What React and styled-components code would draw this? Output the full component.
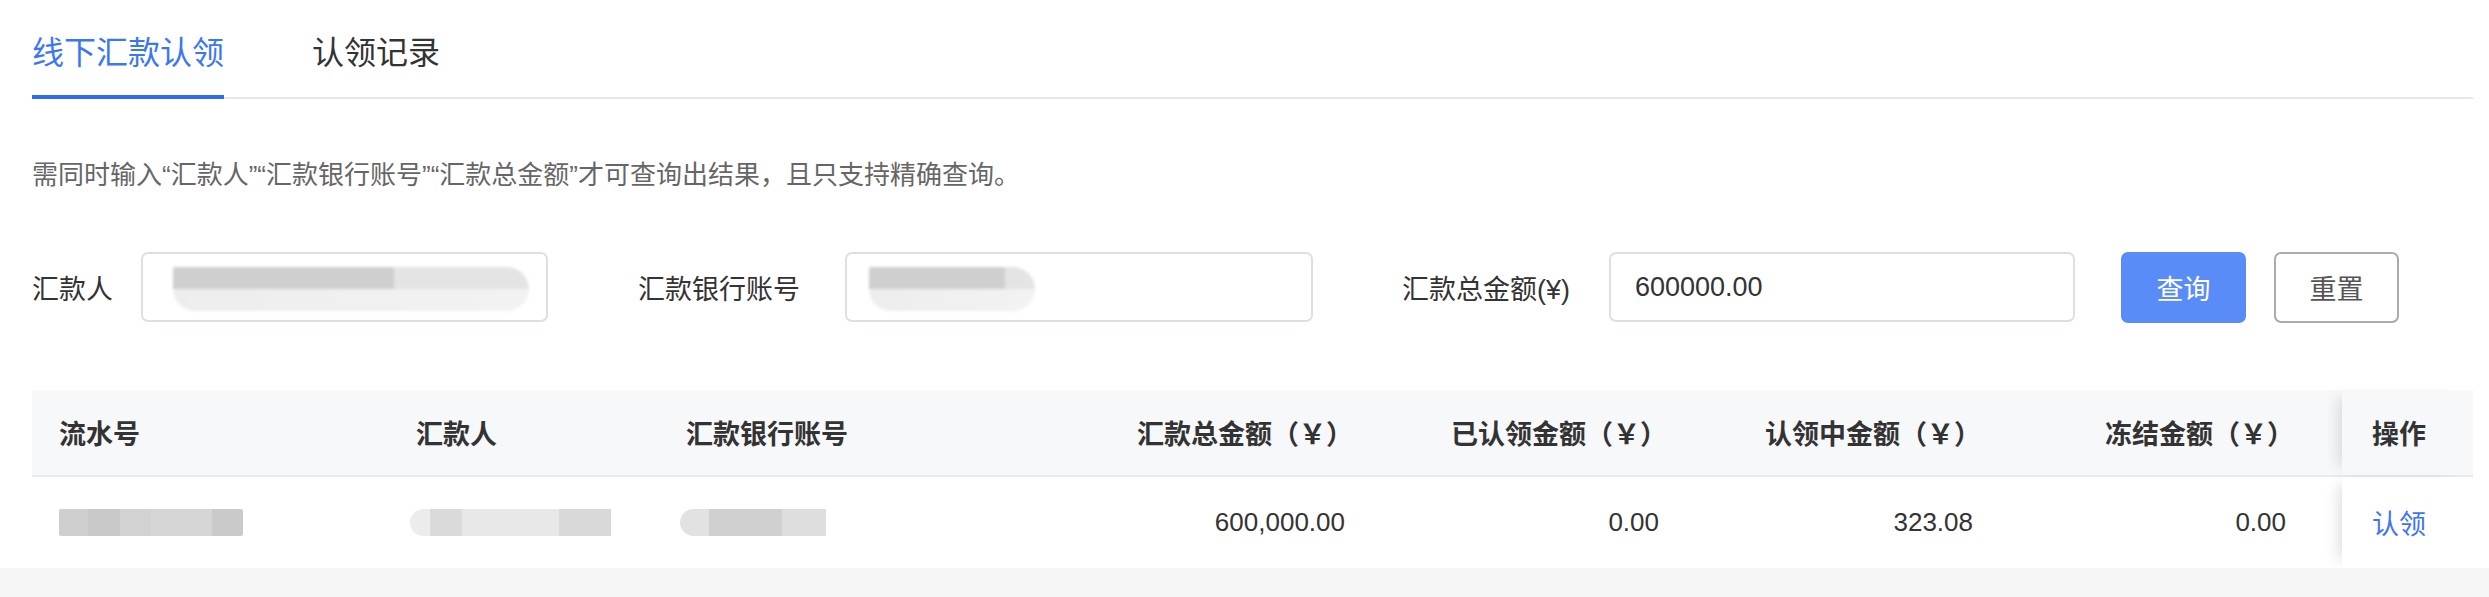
import React from 'react';
import styled, {createGlobalStyle} from 'styled-components';

const GlobalStyle = createGlobalStyle`
  html, body {
    margin: 0;
    padding: 0;
    background: #f6f6f6;
    font-family: "Liberation Sans", "Noto Sans CJK SC", sans-serif;
  }
  * {
    box-sizing: border-box;
  }
`;

const columns = [
  {title: '流水号', w: 357},
  {title: '汇款人', w: 270},
  {title: '汇款银行账号', w: 399},
  {title: '汇款总金额（￥）', w: 314, right: true},
  {title: '已认领金额（￥）', w: 314, right: true},
  {title: '认领中金额（￥）', w: 314, right: true},
  {title: '冻结金额（￥）', w: 342, right: true, pr: 56},
];

const row = {
  total: '600,000.00',
  claimed: '0.00',
  claiming: '323.08',
  frozen: '0.00',
};

function App() {
  return (
    <>
      <GlobalStyle/>
      <Page>
        <TabBar>
          <Tab $active>线下汇款认领</Tab>
          <Tab>认领记录</Tab>
        </TabBar>

        <Hint>需同时输入“汇款人”“汇款银行账号”“汇款总金额”才可查询出结果，且只支持精确查询。</Hint>

        <FilterRow>
          <FormItem $mr={90}>
            <Label $gap={28}>汇款人</Label>
            <Field $w={407}>
              <Input readOnly value=""/>
              <InputMask $left={32} $w={356} $dark={62}/>
            </Field>
          </FormItem>
          <FormItem $mr={89}>
            <Label $gap={45}>汇款银行账号</Label>
            <Field $w={468}>
              <Input readOnly value=""/>
              <InputMask $left={24} $w={166} $dark={82}/>
            </Field>
          </FormItem>
          <FormItem $mr={46}>
            <Label $gap={39}>汇款总金额(¥)</Label>
            <Field $w={466}>
              <Input readOnly value="600000.00"/>
            </Field>
          </FormItem>
          <Button $primary>查询</Button>
          <Button>重置</Button>
        </FilterRow>

        <Table>
          <HeadRow>
            {columns.map(c => (
              <HeadCell key={c.title} $w={c.w} $right={c.right} $pr={c.pr}>{c.title}</HeadCell>
            ))}
            <FixedHead>操作</FixedHead>
          </HeadRow>
          <BodyRow>
            <Cell $w={357}><CellMask $w={184} $tone="dark"/></Cell>
            <Cell $w={270}><CellMask $w={201} $tone="light" $round/></Cell>
            <Cell $w={399}><CellMask $w={146} $tone="mid" $round/></Cell>
            <Cell $w={314} $right>{row.total}</Cell>
            <Cell $w={314} $right>{row.claimed}</Cell>
            <Cell $w={314} $right>{row.claiming}</Cell>
            <Cell $w={342} $right $pr={56}>{row.frozen}</Cell>
            <FixedCell><Link>认领</Link></FixedCell>
          </BodyRow>
        </Table>
      </Page>
    </>
  );
}

const Page = styled.div`
  background: #fff;
  padding: 0 16px 0 32px;
`;

const TabBar = styled.div`
  display: flex;
  gap: 88px;
  height: 99px;
  border-bottom: 2px solid #e4e7ed;
`;

const Tab = styled.div`
  position: relative;
  height: 97px;
  padding-top: 33px;
  font-size: 32px;
  line-height: 40px;
  color: ${p => p.$active ? '#3a78f2' : '#333'};
  cursor: pointer;

  &::after {
    content: '';
    display: ${p => p.$active ? 'block' : 'none'};
    position: absolute;
    left: 0;
    right: 0;
    bottom: -2px;
    height: 4px;
    background: #2f6cf0;
  }
`;

const Hint = styled.div`
  margin-top: 58px;
  font-size: 26px;
  line-height: 36px;
  color: #666;
`;

const FilterRow = styled.div`
  display: flex;
  align-items: center;
  margin-top: 59px;
  height: 70px;
`;

const FormItem = styled.div`
  display: flex;
  align-items: center;
  margin-right: ${p => p.$mr}px;
`;

const Label = styled.label`
  font-size: 27px;
  color: #333;
  margin-right: ${p => p.$gap}px;
  white-space: nowrap;
`;

const Field = styled.div`
  position: relative;
  width: ${p => p.$w}px;
  height: 70px;
`;

const Input = styled.input`
  width: 100%;
  height: 100%;
  padding: 0 24px;
  border: 2px solid #dcdfe6;
  border-radius: 7px;
  font-family: inherit;
  font-size: 27px;
  color: #333;
  background: #fff;
  outline: none;
`;

const InputMask = styled.div`
  position: absolute;
  left: ${p => p.$left}px;
  top: 15px;
  width: ${p => p.$w}px;
  height: 44px;
  border-radius: 0 22px 22px 22px;
  background:
    linear-gradient(90deg, #cfcfcf 0 ${p => p.$dark}%, #e4e4e4 ${p => p.$dark}% 100%) top / 100% 50% no-repeat,
    linear-gradient(90deg, #ededed, #f2f2f2) bottom / 100% 50% no-repeat;
  filter: blur(1.5px);
`;

const Button = styled.button`
  width: 125px;
  height: 71px;
  margin-right: 28px;
  border-radius: 7px;
  font-family: inherit;
  font-size: 27px;
  cursor: pointer;
  border: 2px solid ${p => p.$primary ? '#5a8cf7' : '#a8abb2'};
  background: ${p => p.$primary ? '#5a8cf7' : '#fff'};
  color: ${p => p.$primary ? '#fff' : '#555'};
`;

const Table = styled.div`
  margin-top: 68px;
  width: 2441px;
`;

const HeadRow = styled.div`
  display: flex;
  height: 87px;
  background: #f7f8fa;
  border-bottom: 2px solid #e6eaf2;
`;

const BodyRow = styled.div`
  display: flex;
  height: 91px;
  background: #fff;
`;

const Cell = styled.div`
  display: flex;
  align-items: center;
  justify-content: ${p => p.$right ? 'flex-end' : 'flex-start'};
  flex: 0 0 ${p => p.$w}px;
  padding: 0 ${p => p.$pr || 27}px 0 27px;
  font-size: 26px;
  color: #333;
  white-space: nowrap;
`;

const HeadCell = styled(Cell)`
  font-size: 27px;
  font-weight: bold;
  padding-right: ${p => (p.$pr || 27) - 8}px;
`;

const FixedCell = styled.div`
  flex: 1;
  display: flex;
  align-items: center;
  padding-left: 30px;
  font-size: 27px;
  box-shadow: -12px 0 14px -8px rgba(0, 0, 0, 0.12);
`;

const FixedHead = styled(FixedCell)`
  font-weight: bold;
  color: #333;
`;

const Link = styled.a`
  color: #3f74f3;
  cursor: pointer;
`;

const tones = {
  dark: 'linear-gradient(90deg, #cfcfcf 0 16%, #c9c9c9 16% 33%, #d2d2d2 33% 50%, #d6d6d6 50% 83%, #cacaca 83% 100%)',
  light: 'linear-gradient(90deg, #ececec 0 10%, #dadada 10% 26%, #e8e8e8 26% 74%, #d9d9d9 74% 100%)',
  mid: 'linear-gradient(90deg, #e2e2e2 0 20%, #d0d0d0 20% 70%, #dedede 70% 100%)',
};

const CellMask = styled.div`
  width: ${p => p.$w}px;
  height: 27px;
  margin-left: ${p => p.$round ? -6 : 0}px;
  border-radius: ${p => p.$round ? '14px 0 0 14px' : '2px'};
  background: ${p => tones[p.$tone]};
`;

export default App;
